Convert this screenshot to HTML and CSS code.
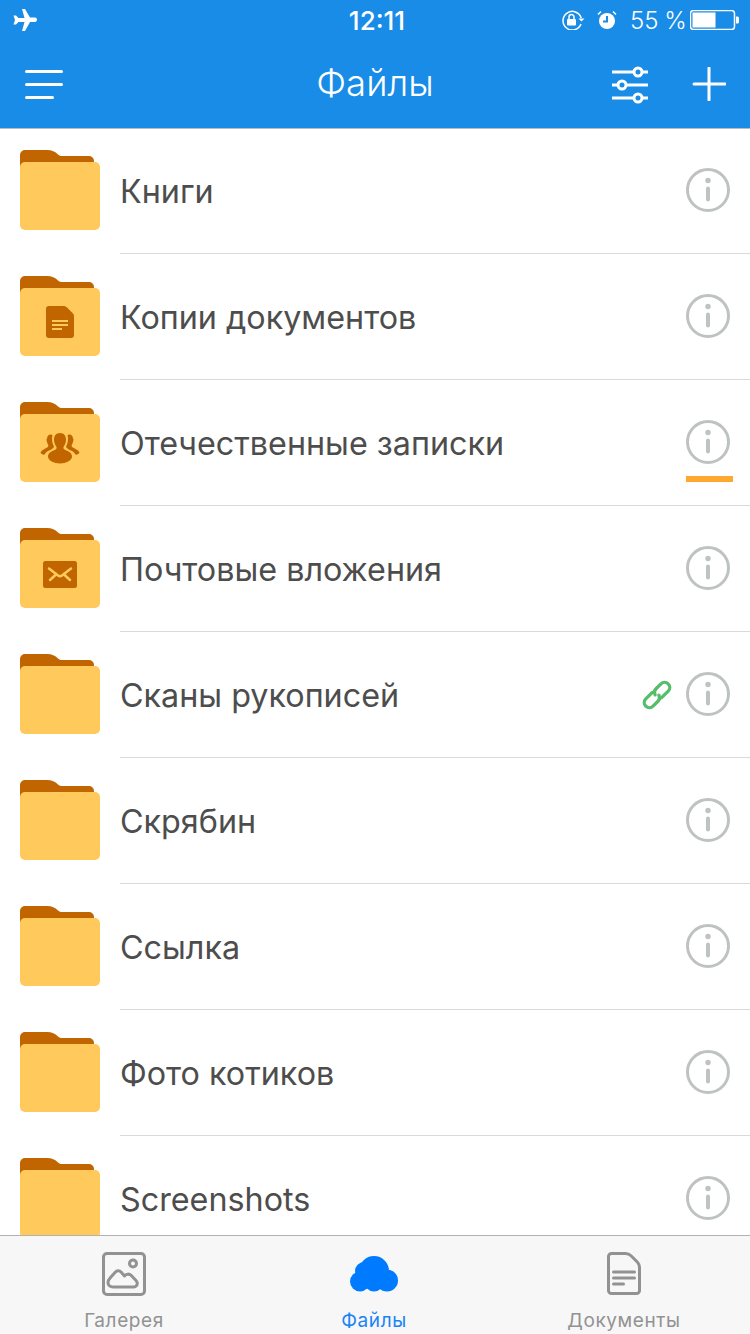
FILE: index.html
```html
<!DOCTYPE html>
<html lang="ru">
<head>
<meta charset="utf-8">
<title>Файлы</title>
<link rel="stylesheet" href="styles.css">
</head>
<body>
<svg class="defs" width="0" height="0" aria-hidden="true">
  <symbol id="folder" viewBox="0 0 80 80">
    <path class="f-back" d="M0 30V5a5 5 0 0 1 5-5h22c5 0 8 1.500 11 4.500c1.500 1.500 2.500 1.500 4 1.500h27a5 5 0 0 1 5 5V30z"/>
    <rect class="f-front" x="0" y="12" width="80" height="68" rx="5"/>
  </symbol>
  <symbol id="info" viewBox="0 0 44 44">
    <circle class="i-ring" cx="22" cy="22" r="20.500"/>
    <circle class="i-mark" cx="22" cy="12.500" r="2.700"/>
    <rect class="i-mark" x="20" y="18.500" width="4" height="15" rx="2"/>
  </symbol>
</svg>

<div class="screen">
  <header class="top">
    <div class="status">
      <svg class="s-plane" viewBox="0 0 24 22"><path d="M9 0h3l5 8.500h5c1.200 0 2 1 2 2.200s-.8 2.300-2 2.300h-5l-5 9H9l2.500-9H5.500L3 15.500H.5L2 11 .5 6.500H3L5.500 9h6z"/></svg>
      <span class="s-time">12:11</span>
      <div class="s-right">
        <svg class="s-lock" viewBox="0 0 24 20"><path class="s-line" d="M20 14a9.300 9.300 0 1 1 .2-6"/><path class="s-fill" d="M17.500 8.500h6l-3 3z"/><path class="s-line" d="M8 9V7a2.500 2.500 0 0 1 5 0v2"/><rect class="s-fill" x="6" y="9" width="9" height="6.500" rx="1"/></svg>
        <svg class="s-alarm" viewBox="0 0 20 20"><circle class="s-fill" cx="10" cy="11" r="8"/><path class="s-blue" d="M10 6v5.500H6"/><path class="s-line" d="M1 4.500L4 1.500M19 4.500L16 1.500"/></svg>
        <span class="s-pct">55 %</span>
        <svg class="s-batt" viewBox="0 0 49 20"><rect class="s-line" x=".5" y=".5" width="44" height="19" rx="3"/><rect class="s-fill" x="2.500" y="2.500" width="23" height="15"/><path class="s-fill" d="M46 6.500h1.500a1.500 1.500 0 0 1 1.500 1.500v4a1.500 1.500 0 0 1-1.500 1.500H46z"/></svg>
      </div>
    </div>
    <nav class="nav">
      <svg class="n-menu" viewBox="0 0 38 30"><path d="M1.500 1.500h35M1.500 14.500h35M1.500 27.500h26"/></svg>
      <h1 class="n-title">Файлы</h1>
      <div class="n-actions">
        <svg class="n-filter" viewBox="0 0 36 34"><path d="M0 4h36M0 17h36M0 30h36"/><circle cx="26" cy="4" r="4"/><circle cx="10" cy="17" r="4"/><circle cx="26" cy="30" r="4"/></svg>
        <svg class="n-plus" viewBox="0 0 34 34"><path d="M17 1v32M2 17h31"/></svg>
      </div>
    </nav>
  </header>

  <main class="list">
    <div class="row">
      <svg class="folder"><use href="#folder"/></svg>
      <div class="row-body"><span class="name">Книги</span><svg class="info"><use href="#info"/></svg></div>
    </div>
    <div class="row">
      <div class="folder-wrap">
        <svg class="folder"><use href="#folder"/></svg>
        <svg class="badge" viewBox="0 0 80 80"><path class="b-dark" d="M29 30h14c2 0 3 .5 4.500 2l5 5c1 1 1.500 2 1.500 3.500V59a3 3 0 0 1-3 3H29a3 3 0 0 1-3-3V33a3 3 0 0 1 3-3z"/><path class="b-light" d="M32 45h16M32 49h16M32 53h10"/></svg>
      </div>
      <div class="row-body"><span class="name">Копии документов</span><svg class="info"><use href="#info"/></svg></div>
    </div>
    <div class="row">
      <div class="folder-wrap">
        <svg class="folder"><use href="#folder"/></svg>
        <svg class="badge" viewBox="0 0 80 80"><path class="b-dark" d="M27 37c0-3 1.500-4.500 3.500-4.500 1 0 1.500.3 2 .8-.3 1-.5 2.200-.5 3.700 0 3 1 5.500 2 7.500-.2 1.500-2.500 3-6 4.500-1.500.8-2.500 2-3.500 3.500-1 .5-2.500 0-3.500-1-.8-1 0-2 1-3 1.500-1.300 4-2.300 5.500-3.300.8-.6 1.200-1.200.7-2.200-1-2-1.700-3.700-1.700-6.500zM53 37c0-3-1.500-4.500-3.500-4.500-1 0-1.500.3-2 .8.300 1 .5 2.200.5 3.700 0 3-1 5.500-2 7.500.2 1.500 2.500 3 6 4.500 1.500.8 2.500 2 3.500 3.500 1 .5 2.500 0 3.500-1 .8-1 0-2-1-3-1.500-1.300-4-2.300-5.500-3.300-.8-.6-1.200-1.200-.7-2.200 1-2 1.700-3.700 1.700-6.500z"/><path class="b-dark" d="M40 31c3.800 0 6 2.800 6 6.500 0 3-1.200 5.500-2.500 7.500-.5 1.500.5 2.500 3 3.500 3 1.200 5.500 3 5.500 6 0 4-6 7-12 7s-12-3-12-7c0-3 2.500-4.800 5.500-6 2.500-1 3.500-2 3-3.500-1.300-2-2.500-4.500-2.500-7.500 0-3.700 2.200-6.500 6-6.500z"/></svg>
      </div>
      <div class="row-body"><span class="name">Отечественные записки</span><div class="info-wrap"><svg class="info"><use href="#info"/></svg><span class="progress"></span></div></div>
    </div>
    <div class="row">
      <div class="folder-wrap">
        <svg class="folder"><use href="#folder"/></svg>
        <svg class="badge" viewBox="0 0 80 80"><rect class="b-dark" x="23" y="33" width="34" height="27" rx="2.500"/><path class="b-mail" d="M29 40.500L38 47.500c1.300 1 2.700 1 4 0L51 40.500M30 52L36.500 46M50 52L43.500 46"/></svg>
      </div>
      <div class="row-body"><span class="name">Почтовые вложения</span><svg class="info"><use href="#info"/></svg></div>
    </div>
    <div class="row">
      <svg class="folder"><use href="#folder"/></svg>
      <div class="row-body"><span class="name">Сканы рукописей</span>
        <svg class="link" viewBox="0 0 30 30"><g transform="rotate(-45 15 15)"><path d="M13.500 9.500H3.500a5.500 5.500 0 0 0 0 11H11a5.500 5.500 0 0 0 5.300-4"/><path d="M16.500 20.500H26.500a5.500 5.500 0 0 0 0-11H19a5.500 5.500 0 0 0-5.300 4"/></g></svg>
        <svg class="info"><use href="#info"/></svg></div>
    </div>
    <div class="row">
      <svg class="folder"><use href="#folder"/></svg>
      <div class="row-body"><span class="name">Скрябин</span><svg class="info"><use href="#info"/></svg></div>
    </div>
    <div class="row">
      <svg class="folder"><use href="#folder"/></svg>
      <div class="row-body"><span class="name">Ссылка</span><svg class="info"><use href="#info"/></svg></div>
    </div>
    <div class="row">
      <svg class="folder"><use href="#folder"/></svg>
      <div class="row-body"><span class="name">Фото котиков</span><svg class="info"><use href="#info"/></svg></div>
    </div>
    <div class="row">
      <svg class="folder"><use href="#folder"/></svg>
      <div class="row-body"><span class="name">Screenshots</span><svg class="info"><use href="#info"/></svg></div>
    </div>
  </main>

  <footer class="tabs">
    <div class="tab">
      <svg class="t-icon" viewBox="0 0 44 44"><rect x="1.500" y="1.500" width="41" height="41" rx="3.500"/><circle cx="31" cy="11.500" r="3.500"/><path d="M11 35c-3 0-5-2-5-4.500 0-2 1-3.300 2.500-5l4.500-5c2-2.300 4.500-2.300 6.500 0l3 3.500c1.500-2.300 4.800-2.500 6.800-.5l4.700 5c2.500 2.800 1 6.500-2.500 6.500z"/></svg>
      <span class="t-label">Галерея</span>
    </div>
    <div class="tab tab-on">
      <svg class="t-cloud" viewBox="0 0 48 36"><circle cx="24" cy="15" r="15"/><circle cx="14" cy="15" r="9"/><circle cx="10" cy="25.500" r="10"/><circle cx="24" cy="26" r="9.500"/><circle cx="37" cy="24.500" r="11"/></svg>
      <span class="t-label">Файлы</span>
    </div>
    <div class="tab">
      <svg class="t-icon" viewBox="0 0 44 44"><path d="M9.500 1.500h14c2.500 0 4 .7 5.500 2.200l6.300 6.300c1.500 1.500 2.200 3 2.200 5.500v23a3 3 0 0 1-3 3h-25a3 3 0 0 1-3-3v-34a3 3 0 0 1 3-3z"/><path d="M11.500 20h21M11.500 26h21M11.500 32h10"/></svg>
      <span class="t-label">Документы</span>
    </div>
  </footer>
</div>
</body>
</html>
```
FILE: styles.css
```css
* { box-sizing: border-box; }
html, body { margin: 0; padding: 0; background: #fff; }
body { font-family: "Inter", "Roboto", "Liberation Sans", sans-serif; }
.defs { position: absolute; }
svg { display: block; flex: none; }

.screen { width: 750px; height: 1334px; display: flex; flex-direction: column; overflow: hidden; }

.top { height: 129px; flex: none; background: #188ce6; border-bottom: 1px solid #b5bcc2; color: #fff; margin-bottom: -1px; }
.status { height: 40px; display: flex; align-items: center; justify-content: space-between; padding: 0 11px 0 13px; position: relative; }
.s-plane { width: 24px; height: 22px; fill: #fff; }
.s-time { position: absolute; left: 4px; right: 0; text-align: center; font-size: 26px; font-weight: 500; }
.s-right { display: flex; align-items: center; }
.s-lock { width: 24px; height: 20px; }
.s-alarm { width: 20px; height: 20px; margin-left: 12px; }
.s-pct { font-size: 24px; font-weight: 300; word-spacing: -1px; margin-left: 13px; width: 56px; white-space: nowrap; }
.s-batt { width: 49px; height: 20px; margin-left: 4px; }
.s-line { fill: none; stroke: #fff; stroke-width: 1.500; }
.s-fill { fill: #fff; }
.s-blue { fill: none; stroke: #188ce6; stroke-width: 2; }

.nav { height: 88px; display: flex; align-items: center; justify-content: space-between; padding: 1px 24px 0 25px; position: relative; }
.n-menu { width: 38px; height: 30px; fill: none; stroke: #fff; stroke-width: 3; stroke-linecap: round; }
.n-title { position: absolute; left: 0; right: 0; margin: -2px 0 0; text-align: center; font-size: 36.500px; font-weight: 300; line-height: 1; }
.n-actions { display: flex; align-items: center; gap: 44px; }
.n-filter { width: 36px; height: 34px; fill: #188ce6; stroke: #fff; stroke-width: 3; overflow: visible; }
.n-plus { width: 34px; height: 34px; margin-bottom: 2px; fill: none; stroke: #fff; stroke-width: 3; stroke-linecap: round; }

.list { flex: 1; min-height: 0; overflow: hidden; }
.row { height: 126px; display: flex; padding-left: 20px; }
.folder-wrap { position: relative; width: 80px; height: 80px; margin-top: 22px; flex: none; }
.row > .folder { margin-top: 22px; }
.folder { width: 80px; height: 80px; }
.f-back { fill: #c06500; }
.f-front { fill: #ffc95c; }
.badge { position: absolute; inset: 0; width: 80px; height: 80px; }
.b-dark { fill: #c06500; }
.b-light { fill: none; stroke: #ffc95c; stroke-width: 2; }
.b-mail { fill: none; stroke: #ffc95c; stroke-width: 2.500; stroke-linecap: round; stroke-linejoin: round; }

.row-body { flex: 1; margin-left: 20px; height: 126px; display: flex; align-items: center; padding-right: 20px; border-bottom: 1px solid #d9d9d9; }
.name { flex: 1; margin-top: 2px; font-size: 32.300px; color: #4d4d4d; white-space: nowrap; }
.info { width: 44px; height: 44px; margin-bottom: 2px; }
.i-ring { fill: none; stroke: #bfc2c2; stroke-width: 3; }
.i-mark { fill: #bfc2c2; }
.info-wrap { position: relative; }
.progress { position: absolute; left: 0; top: 56px; width: 47px; height: 6px; background: #ffa830; }
.link { width: 28px; height: 28px; margin-right: 15px; fill: none; stroke: #56bd69; stroke-width: 3.500; stroke-linecap: round; overflow: visible; }

.tabs { height: 99px; flex: none; background: #f7f7f7; border-top: 1px solid #b2b2b2; display: grid; grid-template-columns: repeat(3, 250px); }
.tab { display: flex; flex-direction: column; align-items: center; padding: 16px 2px 0 0; color: #929292; }
.t-icon { width: 44px; height: 44px; fill: none; stroke: #929292; stroke-width: 3; stroke-linecap: round; stroke-linejoin: round; }
.t-cloud { width: 48px; height: 36px; margin: 4px 0; fill: #007aff; }
.t-label { margin-top: 13px; font-size: 19px; line-height: 24px; letter-spacing: .6px; }
.tab-on { color: #1a84f5; }
```
